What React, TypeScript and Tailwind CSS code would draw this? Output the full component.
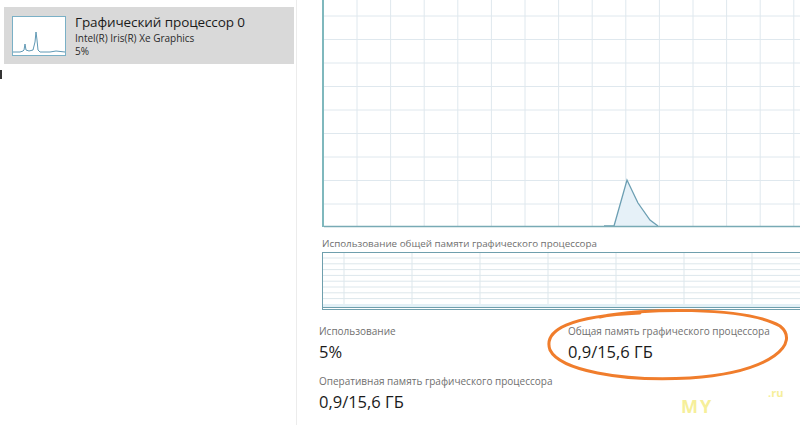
import React from "react";

const font = { fontFamily: '"Open Sans", "Noto Sans", sans-serif' };

const MainChart = () => {
  const w = 478;
  const h = 228;
  const vx: number[] = [];
  for (let x = 35; x < w; x += 33.6) vx.push(x);
  const hy: number[] = [];
  for (let y = 16; y < 226; y += 23.5) hy.push(y);
  return (
    <svg width={w} height={h} className="block shrink-0">
      {vx.map((x) => (
        <line key={"v" + x} x1={x} y1={0} x2={x} y2={226} stroke="#dfe8ee" strokeWidth={1} />
      ))}
      {hy.map((y) => (
        <line key={"h" + y} x1={2} y1={y} x2={w} y2={y} stroke="#dfe8ee" strokeWidth={1} />
      ))}
      <polygon points="292,226 305,180 316,203 328,220 336,226" fill="#e6f1f8" />
      <polyline
        points="282,226 292,226 305,180 316,203 328,220 336,226"
        fill="none"
        stroke="#6c9fb3"
        strokeWidth={1.3}
      />
      <line x1={2} y1={226.5} x2={w} y2={226.5} stroke="#78aab5" strokeWidth={1.5} />
      <line x1={1} y1={0} x2={1} y2={227} stroke="#7fb8bd" strokeWidth={2} />
    </svg>
  );
};

const MemChart = () => {
  const w = 478;
  const vx: number[] = [];
  for (let x = 22; x < w; x += 68) vx.push(x);
  const hy: number[] = [];
  for (let y = 6; y < 52; y += 5.8) hy.push(y);
  return (
    <svg width={w} height={58} className="block shrink-0">
      {hy.map((y) => (
        <line key={"h" + y} x1={1} y1={y} x2={w} y2={y} stroke="#dde7ec" strokeWidth={1} />
      ))}
      {vx.map((x) => (
        <line key={"v" + x} x1={x} y1={1} x2={x} y2={56} stroke="#dde7ec" strokeWidth={1} />
      ))}
      <rect x={1} y={52} width={w} height={3} fill="#e3f0f6" />
      <line x1={0} y1={0.5} x2={w} y2={0.5} stroke="#6f9fad" strokeWidth={1} />
      <line x1={0.5} y1={0} x2={0.5} y2={57} stroke="#6f9fad" strokeWidth={1} />
      <line x1={0} y1={55.5} x2={w} y2={55.5} stroke="#6f9fad" strokeWidth={1} />
      <line x1={0} y1={57.5} x2={w} y2={57.5} stroke="#6f9fad" strokeWidth={1} />
    </svg>
  );
};

const Thumb = () => (
  <svg width={54} height={40} className="block shrink-0">
    <rect x={0.5} y={0.5} width={53} height={39} fill="#fff" stroke="#7ab0c6" />
    <polyline
      points="1,36 8,36 11,35 12,34 13,28 14,34 17,35 21,34 23,26 24,16 25,24 26,34 28,36 38,36 44,35 53,36"
      fill="none"
      stroke="#5f98b4"
      strokeWidth={1}
    />
  </svg>
);

const Stat = ({ label, value }: { label: string; value: string }) => (
  <div className="whitespace-nowrap">
    <div className="text-[10px] leading-[14px] text-[#6f6f6f]">{label}</div>
    <div className="mt-[3px] text-[16.5px] leading-[22px] text-[#1b1b1b]">{value}</div>
  </div>
);

export default function App() {
  return (
    <div className="relative flex h-[425px] w-[800px] overflow-hidden bg-white" style={font}>
      <div className="relative w-[297px] shrink-0 border-r border-[#ececec] pl-[4px] pr-[2px] pt-[7px]">
        <div className="flex h-[57px] gap-[9px] bg-[#d9d9d9] pl-[8px] pt-[9px]">
          <Thumb />
          <div className="-mt-[4px] whitespace-nowrap">
            <div className="text-[13.5px] leading-[20px] tracking-[-0.1px] text-[#1b1b1b]">
              Графический процессор 0
            </div>
            <div className="text-[10px] leading-[13px] text-[#2a2a2a]">
              Intel(R) Iris(R) Xe Graphics
            </div>
            <div className="text-[10px] leading-[13px] text-[#2a2a2a]">5%</div>
          </div>
        </div>
        <div className="absolute left-0 top-[70px] h-[9px] w-[2px] bg-[#333]" />
      </div>

      <div className="flex flex-1 flex-col pl-[25px]">
        <MainChart />
        <div className="mt-[8px] h-[15px] whitespace-nowrap text-[9.8px] leading-[15px] text-[#6f6f6f]">
          Использование общей памяти графического процессора
        </div>
        <div className="mt-[1px]">
          <MemChart />
        </div>
        <div className="-ml-[3px] mt-[14px] grid grid-cols-[249px_1fr]">
          <div className="flex flex-col gap-[11px]">
            <Stat label="Использование" value="5%" />
            <Stat label="Оперативная память графического процессора" value="0,9/15,6 ГБ" />
          </div>
          <Stat label="Общая память графического процессора" value="0,9/15,6 ГБ" />
        </div>
      </div>

      <svg width={800} height={425} className="pointer-events-none absolute left-0 top-0">
        <path
          d="M 600 317 C 640 308, 745 306, 780 326 C 800 342, 775 372, 690 378 C 620 382, 560 370, 550 350 C 543 330, 570 316, 640 313"
          fill="none"
          stroke="#f07d2c"
          strokeWidth={3}
          strokeLinecap="round"
        />
      </svg>
      <div className="absolute left-[681px] top-[396px] text-[18px] font-bold leading-[20px] tracking-[2px] text-[#f6ef9a]">
        MY
      </div>
      <div className="absolute left-[768px] top-[387px] text-[11px] font-bold leading-[12px] text-[#f6ef9a]">
        .ru
      </div>
    </div>
  );
}
